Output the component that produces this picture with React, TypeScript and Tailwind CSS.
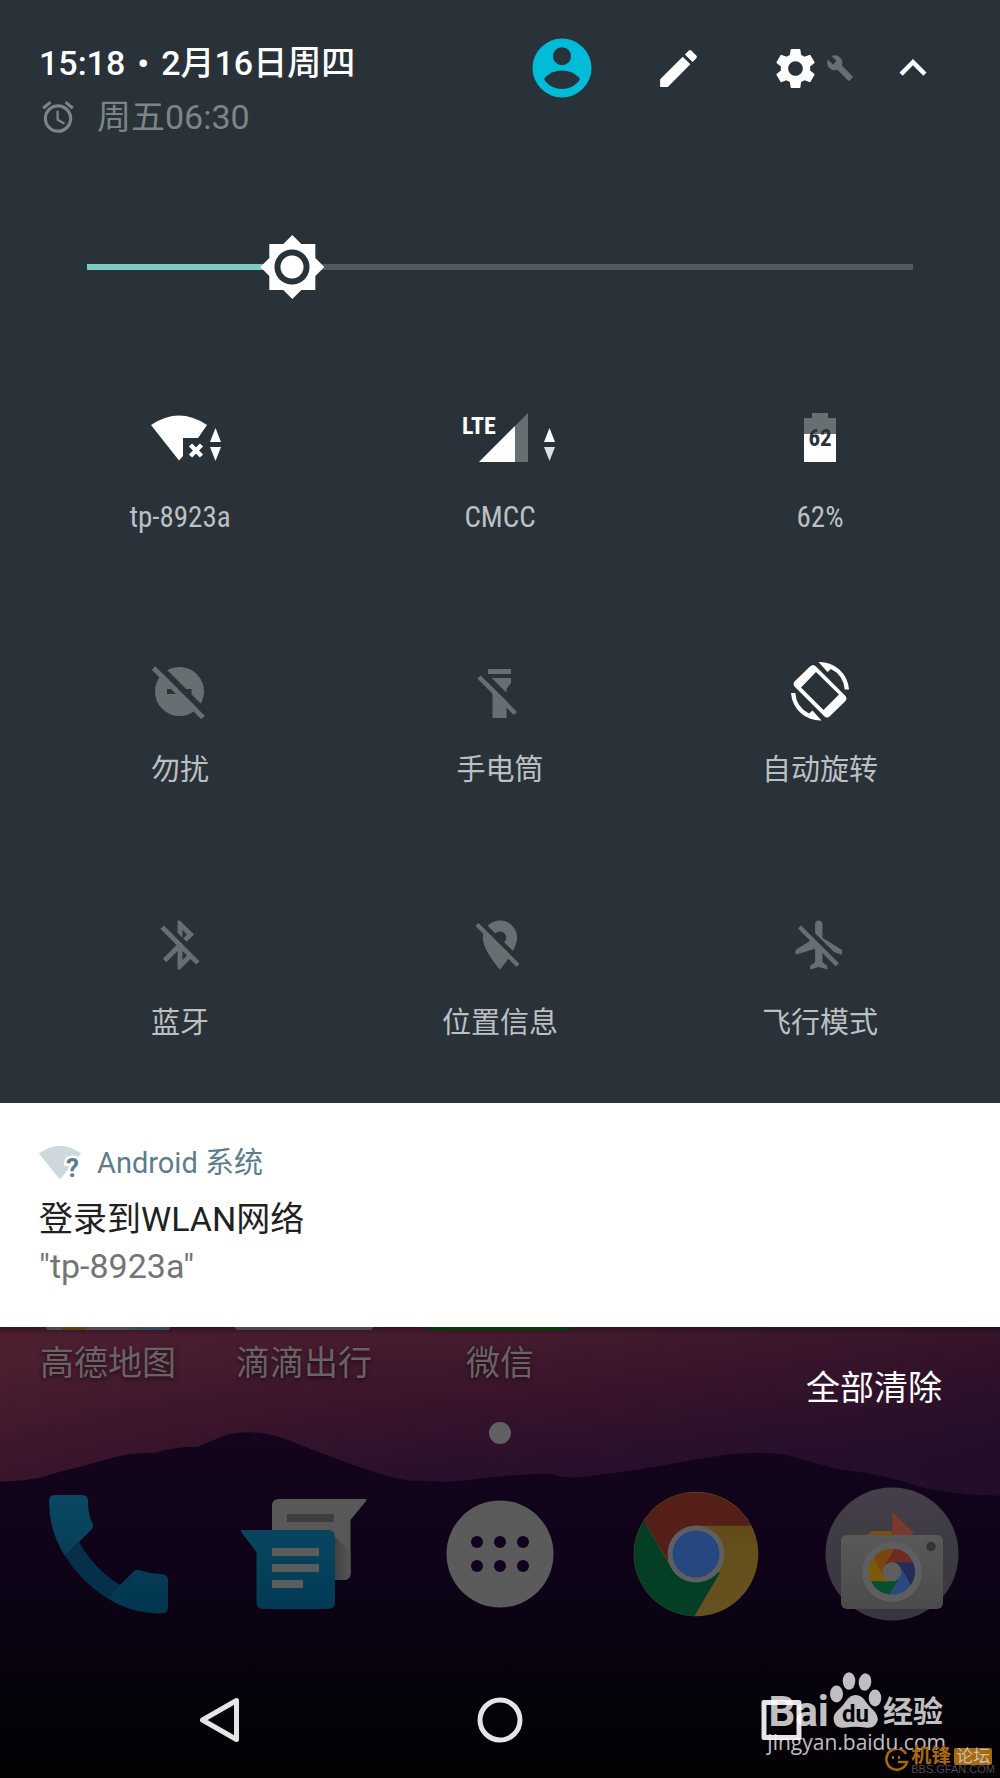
import { useState } from 'react'
import type { ReactNode } from 'react'
import { MdAlarm, MdBuild, MdExpandLess, MdModeEdit, MdSettings } from 'react-icons/md'

interface Tile {
  id: string
  label: string
  icon: ReactNode
}

const MAX_BRIGHTNESS = 255
const THUMB = 64

const OFF = '#686f72'
const PANEL = '#283238'

function DataArrows({ x, idle }: { x: number; idle?: boolean }) {
  return (
    <g fill="#fff">
      <path d={`M${x} 35l5.5-14 5.5 14z`} />
      <path d={`M${x} 40h11l-5.5 14z`} opacity={idle ? 0.85 : 1} />
    </g>
  )
}

function TileIcon({ children }: { children: ReactNode }) {
  return (
    <svg viewBox="0 0 120 64" className="w-[120px] h-16" aria-hidden="true">
      {children}
    </svg>
  )
}

// 24-unit material glyph drawn in the middle of the tile
function OffGlyph({ d }: { d: string }) {
  return (
    <TileIcon>
      <path d={d} fill={OFF} transform="translate(30.6 2.6) scale(2.45)" />
    </TileIcon>
  )
}

const TILES: Tile[] = [
  {
    id: 'wifi',
    label: 'tp-8923a',
    icon: (
      <TileIcon>
        <path d="M31 18Q59-1 87 18L78 31H63V49L59 53.5Z" fill="#fff" />
        <path d="M70.5 38l11 11M81.5 38l-11 11" stroke="#fff" strokeWidth="4.5" />
        <DataArrows x={90} />
      </TileIcon>
    ),
  },
  {
    id: 'cell',
    label: 'CMCC',
    icon: (
      <TileIcon>
        <text x="22" y="27" fill="#fff" className="font-['Roboto_Condensed',Roboto,sans-serif] text-[24px] font-bold">
          LTE
        </text>
        <path d="M39 55L88 6V55Z" fill={OFF} />
        <path d="M39 55L75 19V55Z" fill="#fff" />
        <DataArrows x={104} idle />
      </TileIcon>
    ),
  },
  {
    id: 'battery',
    label: '62%',
    icon: (
      <TileIcon>
        <path d="M52 6H68V11H76V27H44V11H52Z" fill={OFF} />
        <path d="M44 27H76V55H44Z" fill="#fff" />
        <text x="60" y="39" textAnchor="middle" fill={PANEL} className="font-['Roboto_Condensed',Roboto,sans-serif] text-[23px] font-bold">
          62
        </text>
      </TileIcon>
    ),
  },
  {
    id: 'dnd',
    label: '勿扰',
    icon: (
      <TileIcon>
        <circle cx="59.5" cy="31.5" r="24.5" fill={OFF} />
        <path d="M47 29H71.5V34H47Z" fill={PANEL} />
        <path d="M37 4L89 56" stroke={PANEL} strokeWidth="6" />
        <path d="M33.5 8L83 57.5" stroke={OFF} strokeWidth="5" />
      </TileIcon>
    ),
  },
  {
    id: 'flashlight',
    label: '手电筒',
    icon: (
      <TileIcon>
        <path d="M48 18H71V23L66.5 29V58H52.5V29L48 23Z" fill={OFF} />
        <path d="M42 12.5L80 50.5" stroke={PANEL} strokeWidth="6" />
        <path d="M48 9H71V14H48Z" fill={OFF} />
        <path d="M39 17L75.5 53.5" stroke={OFF} strokeWidth="4.5" />
      </TileIcon>
    ),
  },
  {
    id: 'rotate',
    label: '自动旋转',
    icon: (
      <TileIcon>
        <path
          fill="#fff"
          fillRule="evenodd"
          d="M50 6.500Q53 3.500 56 6.500L85 35.500Q88 38.500 85 41.500L70 56Q67 59 64 56L35 27Q32 24 35 21ZM56 12L41 27.500L63.500 50L79 34.500Z"
        />
        <path fill="#fff" d="M58.500 2A29.500 29.500 0 0 1 89 29.500H84.700A25 25 0 0 0 71 9L67.500 12Z" />
        <path fill="#fff" transform="rotate(180 60 31.3)" d="M58.500 2A29.500 29.500 0 0 1 89 29.500H84.700A25 25 0 0 0 71 9L67.500 12Z" />
      </TileIcon>
    ),
  },
  {
    id: 'bluetooth',
    label: '蓝牙',
    icon: (
      <OffGlyph d="M13 5.83l1.88 1.88-1.6 1.6 1.41 1.41 3.02-3.02L12 2h-1v5.03l2 2v-3.2zM5.41 4L4 5.41 10.59 12 5 17.59 6.41 19 11 14.41V22h1l4.29-4.29 2.3 2.29L20 18.59 5.41 4zM13 18.17v-3.76l1.88 1.88L13 18.17z" />
    ),
  },
  {
    id: 'location',
    label: '位置信息',
    icon: (
      <OffGlyph d="M12 6.5c1.38 0 2.5 1.12 2.5 2.5 0 .74-.33 1.39-.83 1.85l3.63 3.63c.98-1.86 1.7-3.8 1.7-5.48 0-3.87-3.13-7-7-7-1.98 0-3.76.83-5.04 2.15l3.19 3.19c.46-.52 1.11-.84 1.85-.84zm4.37 9.6l-4.63-4.63-.11-.11L3.27 3 2 4.27l3.18 3.18C5.07 7.95 5 8.47 5 9c0 5.25 7 13 7 13s1.67-1.85 3.38-4.35L18.73 21 20 19.73l-3.63-3.63z" />
    ),
  },
  {
    id: 'airplane',
    label: '飞行模式',
    icon: (
      <OffGlyph d="M13 9V3.5C13 2.67 12.33 2 11.5 2S10 2.67 10 3.5v3.68l7.83 7.83L21 16v-2l-8-5zM3 5.27l4.99 4.99L2 14v2l8-2.5V19l-2 1.5V22l3.5-1 3.5 1v-1.5L13 19v-3.73L18.46 20.73 19.73 19.46 4.27 4z" />
    ),
  },
]

function Header() {
  return (
    <header className="flex items-start justify-between pl-[39px] pr-[29px] pt-9">
      <div className="text-[34px] leading-[54px] whitespace-nowrap">
        <div className="flex gap-3 font-medium text-white">
          <span>15:18</span>
          <span>•</span>
          <span>2月16日周四</span>
        </div>
        <div className="flex items-center gap-5 text-[#7e8487]">
          <MdAlarm className="size-[38px]" />
          <span>周五06:30</span>
        </div>
      </div>
      <div className="flex h-16 text-white">
        <button type="button" aria-label="User" className="w-[117px] flex items-center justify-center">
          <svg viewBox="0 0 60 60" className="size-[60px]">
            <circle cx="30" cy="30" r="29.5" fill="#00bcd8" />
            <circle cx="30" cy="18.2" r="9" fill={PANEL} />
            <path d="M13 39.500Q20 32.500 30 32.500T47 39.500Q48.500 41 47 43Q40 51 30 51T13 43Q11.500 41 13 39.500Z" fill={PANEL} />
          </svg>
        </button>
        <button type="button" aria-label="Edit" className="w-[117px] flex items-center justify-center">
          <MdModeEdit className="size-[49px]" />
        </button>
        <button type="button" aria-label="Settings" className="relative w-[117px] flex items-center justify-center">
          <MdSettings className="size-[49px]" />
          <MdBuild className="absolute right-0 top-[18px] size-7 text-[#686f72]" />
        </button>
        <button type="button" aria-label="Collapse" className="w-[117px] flex items-center justify-center">
          <MdExpandLess className="size-[54px]" />
        </button>
      </div>
    </header>
  )
}

function BrightnessSlider() {
  const [level, setLevel] = useState(58)
  const ratio = level / MAX_BRIGHTNESS
  const stop = `calc(${THUMB / 2}px + (100% - ${THUMB}px) * ${ratio})`

  return (
    <div className="mt-[91px] px-[87px]">
      <input
        type="range"
        aria-label="Brightness"
        min={0}
        max={MAX_BRIGHTNESS}
        value={level}
        onChange={(e) => setLevel(Number(e.target.value))}
        style={{ backgroundImage: `linear-gradient(to right, #80cbc4 ${stop}, #535b60 ${stop})` }}
        className="block w-full h-16 appearance-none bg-[length:100%_6px] bg-center bg-no-repeat [&::-webkit-slider-thumb]:appearance-none [&::-webkit-slider-thumb]:size-16 [&::-webkit-slider-thumb]:bg-[radial-gradient(circle,#fff_11px,#283238_12px,#283238_17px,#fff_18px)] [&::-webkit-slider-thumb]:[clip-path:polygon(32px_0,41px_9px,55px_9px,55px_23px,64px_32px,55px_41px,55px_55px,41px_55px,32px_64px,23px_55px,9px_55px,9px_41px,0_32px,9px_23px,9px_9px,23px_9px)]"
      />
    </div>
  )
}

function Notification() {
  return (
    <article className="bg-white pl-[39px] pr-10 pt-[38px] pb-[37px]">
      <div className="flex items-center gap-4 text-[29px] leading-[44px] text-[#5c7d8b]">
        <svg viewBox="0 0 42 36" className="w-[42px] h-9 overflow-visible" aria-hidden="true">
          <path d="M0 8.500Q21-7 42 8.500L21 34.500Z" fill="#cfd8dc" />
          <text
            x="27"
            y="32"
            fill="#5c7d8b"
            stroke="#fff"
            strokeWidth="5"
            paintOrder="stroke"
            className="text-[26px] font-bold"
          >
            ?
          </text>
        </svg>
        <span>Android 系统</span>
      </div>
      <h2 className="mt-[11px] text-[34px] leading-[47px] text-[#212121]">登录到WLAN网络</h2>
      <p className="text-[34px] leading-[47px] text-[#747474]">"tp-8923a"</p>
    </article>
  )
}

function Wallpaper() {
  return (
    <svg
      viewBox="0 0 1000 452"
      preserveAspectRatio="none"
      className="absolute inset-0 w-full h-full"
      aria-hidden="true"
    >
      <defs>
        <linearGradient id="sky" x1="460" y1="0" x2="474" y2="170" gradientUnits="userSpaceOnUse">
          <stop offset="0" stopColor="#471c2f" />
          <stop offset="0.5" stopColor="#36132b" />
          <stop offset="1" stopColor="#240e2c" />
        </linearGradient>
        <linearGradient id="side" x1="0" y1="0" x2="1" y2="0">
          <stop offset="0" stopColor="#6b2a36" stopOpacity="0.15" />
          <stop offset="0.5" stopColor="#30122c" stopOpacity="0" />
          <stop offset="1" stopColor="#160a22" stopOpacity="0.2" />
        </linearGradient>
        <linearGradient id="hill" x1="0" y1="0" x2="0" y2="1">
          <stop offset="0" stopColor="#14041d" />
          <stop offset="0.4" stopColor="#0e0318" />
          <stop offset="0.75" stopColor="#06020a" />
          <stop offset="1" stopColor="#030104" />
        </linearGradient>
        <linearGradient id="shade" x1="0" y1="0" x2="0" y2="1">
          <stop offset="0" stopOpacity="0.3" />
          <stop offset="1" stopOpacity="0" />
        </linearGradient>
      </defs>
      <rect width="1000" height="200" fill="url(#sky)" />
      <rect width="1000" height="200" fill="url(#side)" />
      <path
        fill="url(#hill)"
        d="M0 155Q25 154 40 151Q60 144 80 140L120 129Q135 126 155 126Q175 120 197 120C210 116 225 106 240 106Q260 104 282 111C310 122 350 138 380 147Q405 155 420 154Q450 156 470 153Q520 147 550 147Q572 153 585 150L630 144Q660 139 700 132C730 127 750 125 780 127Q810 134 835 142L865 146Q900 153 920 160Q950 168 1000 169V452H0Z"
      />
      <rect width="1000" height="8" fill="url(#shade)" />
    </svg>
  )
}

function PhoneIcon() {
  return (
    <svg viewBox="0 0 120 120" className="size-[120px]">
      <defs>
        <linearGradient id="phone" x1="0" y1="0" x2="0" y2="120" gradientUnits="userSpaceOnUse">
          <stop offset="0" stopColor="#0b4863" />
          <stop offset="1" stopColor="#02354f" />
        </linearGradient>
      </defs>
      <path fill="#06304a" d="M17 62L31 48Q47 76 72 91L59 104Q33 88 17 62Z" />
      <g fill="url(#phone)">
        <path d="M7 1H34Q40 1 40 7Q40 22 45 31Q45.500 33 44 35L17 62Q1 37 1 7Q1 1 7 1Z" />
        <path d="M59 104L85 78Q88 75 91 76Q100 79.500 113 80Q120 80 120 86V113Q120 119.500 113 119.500Q83 119.500 59 104Z" />
      </g>
    </svg>
  )
}

function MessagesIcon() {
  return (
    <svg viewBox="0 0 126 112" className="w-[126px] h-[112px]">
      <defs>
        <linearGradient id="bubble" x1="0" y1="0" x2="0" y2="1">
          <stop offset="0" stopColor="#0a4560" />
          <stop offset="1" stopColor="#023a54" />
        </linearGradient>
        <linearGradient id="fold" x1="0" y1="0" x2="1" y2="0">
          <stop offset="0" stopColor="#404040" />
          <stop offset="1" stopColor="#555" />
        </linearGradient>
      </defs>
      <path fill="#585858" d="M38 1H124Q126 1 125 3L109.500 22V75Q109.500 82 103 82H31V8Q31 1 38 1Z" />
      <path fill="url(#fold)" d="M93 38L109.500 54V75Q109.500 82 103 82H93Z" />
      <path fill="#3e3e3e" d="M46 16H93V24H46Z" />
      <path fill="url(#bubble)" d="M1 32H87Q94 32 94 39V104Q94 111 87 111H22Q15.500 111 15.500 104V54L0 34Q-.5 32 1 32Z" />
      <path fill="#5c5c5c" d="M31 50H78V58H31ZM31 66H78V74H31ZM31 82H62V90H31Z" />
    </svg>
  )
}

function AppsIcon() {
  return (
    <svg viewBox="0 0 108 108" className="size-[108px]">
      <circle cx="54" cy="54" r="53.5" fill="#5b5b5b" />
      {[31, 54, 77].map((x) => (
        <g key={x} fill="#110320">
          <circle cx={x} cy="42" r="6" />
          <circle cx={x} cy="66" r="6" />
        </g>
      ))}
    </svg>
  )
}

function ChromeIcon() {
  return (
    <svg viewBox="0 0 126 126" className="size-[126px]">
      <defs>
        <linearGradient id="yellow" x1="0" y1="0" x2="0" y2="1">
          <stop offset="0" stopColor="#5f4718" />
          <stop offset="0.5" stopColor="#64501c" />
          <stop offset="1" stopColor="#665220" />
        </linearGradient>
      </defs>
      <circle cx="63" cy="63" r="62.3" fill="url(#yellow)" />
      <path fill="#541e19" d="M10.700 29.700A62.300 62.300 0 0 1 118 34.700H63L35 70Z" />
      <path fill="#043f25" d="M10.700 29.700L36 73L63 80L87 81.500L61.300 125.300A62.300 62.300 0 0 1 10.700 29.700Z" />
      <circle cx="63" cy="63" r="28.5" fill="#5f5f5f" />
      <circle cx="63" cy="63" r="23.5" fill="#264780" />
    </svg>
  )
}

function CameraIcon() {
  return (
    <svg viewBox="0 0 134 134" className="size-[134px]">
      <defs>
        <linearGradient id="disc" x1="0" y1="0" x2="0" y2="1">
          <stop offset="0" stopColor="#443f4a" />
          <stop offset="1" stopColor="#38353d" />
        </linearGradient>
        <linearGradient id="body" x1="0" y1="0" x2="0" y2="1">
          <stop offset="0" stopColor="#595959" />
          <stop offset="1" stopColor="#4b4b4b" />
        </linearGradient>
      </defs>
      <circle cx="67" cy="67" r="66.5" fill="url(#disc)" />
      <path fill="#3f3f3f" d="M23 48Q24 41.500 29 41.500H37Q41 41.500 42 48Z" />
      <path fill="#7a5012" d="M42 48L47 44H67V48Z" />
      <path fill="#79392f" d="M67.300 24.700L89 46L87 48H67.300Z" />
      <rect x="16" y="48" width="102" height="74" rx="6" fill="url(#body)" />
      <circle cx="106" cy="59.5" r="4.7" fill="#333" />
      <circle cx="67" cy="84.7" r="30" fill="#5e5e5e" />
      <path fill="#6d2c22" d="M69.400 61.800A23 23 0 0 1 88 75.300L69.800 75.100L67 84.700L60 77.500Z" />
      <path fill="#242d59" d="M88 75.300A23 23 0 0 1 85.600 98.200L76.700 82.300L67 84.700L69.800 75.100Z" />
      <path fill="#274a85" d="M85.600 98.200A23 23 0 0 1 64.600 107.600L74 91.900L67 84.700L76.700 82.300Z" />
      <path fill="#07502e" d="M64.600 107.600A23 23 0 0 1 46 94L64.200 94.300L67 84.700L74 91.900Z" />
      <path fill="#7a5b08" d="M46 94A23 23 0 0 1 48.400 71.200L57.300 87.100L67 84.700L64.200 94.300Z" />
      <path fill="#7b460d" d="M48.400 71.200A23 23 0 0 1 69.400 61.800L60 77.500L67 84.700L57.300 87.100Z" />
      <circle cx="67" cy="84.7" r="9.5" fill="#5e5e5e" />
    </svg>
  )
}

const DOCK = [
  { name: 'Phone', icon: <PhoneIcon /> },
  { name: 'Messages', icon: <MessagesIcon /> },
  { name: 'Apps', icon: <AppsIcon /> },
  { name: 'Chrome', icon: <ChromeIcon /> },
  { name: 'Camera', icon: <CameraIcon /> },
]

function Watermarks() {
  return (
    <>
      <div className="absolute right-[54px] bottom-[24px] text-white/75 whitespace-nowrap">
        <div className="flex items-end justify-end pr-[3px] text-[42px] leading-[44px] font-bold">
          <span>Bai</span>
          <svg viewBox="0 0 54 60" className="w-[54px] h-[60px] mb-1" aria-hidden="true">
            <g fill="#fff" fillOpacity="0.75">
              <ellipse cx="7.5" cy="24" rx="6.5" ry="8.5" />
              <ellipse cx="20" cy="11" rx="6.3" ry="8.7" />
              <ellipse cx="36" cy="12" rx="6.3" ry="8.7" transform="rotate(8 36 12)" />
              <ellipse cx="46" cy="28" rx="6.3" ry="8.5" />
              <path d="M26.500 25Q33 25 37 32Q40 36 46 42Q51 49 47 54Q43 59 36 57.500Q26 56 17 57.500Q8 59 5.500 53Q3 46 8 41Q14 36 17 31Q21 25 26.500 25Z" />
            </g>
            <text x="26.5" y="52" textAnchor="middle" fill="#08030c" className="text-[24px] font-bold">
              du
            </text>
          </svg>
          <span className="text-[30px]">经验</span>
        </div>
        <div className="-mt-1 text-right font-['Open_Sans',sans-serif] text-[21px] font-medium leading-[24px]">jingyan.baidu.com</div>
      </div>
      <div className="absolute right-[5px] bottom-[5px] flex items-center gap-[2px] text-[#a8690d]">
        <svg viewBox="0 0 24 24" className="size-6" aria-hidden="true">
          <path d="M21 5A10.500 10.500 0 1 0 22 13H13" fill="none" stroke="currentColor" strokeWidth="2.5" />
          <path d="M8 7v3M14 7v3" stroke="currentColor" strokeWidth="2" />
        </svg>
        <div className="whitespace-nowrap">
          <div className="flex gap-[3px] text-[20px] leading-[17px] font-bold">
            <span>机锋</span>
            <span className="rounded-xs bg-[#a8690d] px-[2px] text-[17px] font-normal text-[#c9bfae]">论坛</span>
          </div>
          <div className="font-['Liberation_Sans',sans-serif] text-[11px] leading-[8px] text-[#4d4a4f]">BBS.GFAN.COM</div>
        </div>
      </div>
    </>
  )
}

function HomeScreen() {
  return (
    <section className="relative flex-1 overflow-hidden bg-[#030104]">
      <Wallpaper />
      <div className="relative">
        <div className="grid grid-cols-5 px-[10px] text-center text-[34px] leading-[48px]">
          <div>
            <div className="mx-auto flex h-[3px] w-[124px] overflow-hidden rounded-b-md bg-[#514c4b]">
              <div className="ml-4 w-6 bg-[#55421a]" />
              <div className="ml-auto w-9 bg-[#364a5c]" />
            </div>
            <div className="mt-[9px] text-[#6a6265] [text-shadow:0_2px_4px_rgba(0,0,0,0.6)]">高德地图</div>
          </div>
          <div>
            <div className="mx-auto h-[3px] w-[138px] rounded-b-md bg-[#4d4a4b]" />
            <div className="mt-[9px] text-[#6a6265] [text-shadow:0_2px_4px_rgba(0,0,0,0.6)]">滴滴出行</div>
          </div>
          <div>
            <div className="mx-auto h-[3px] w-36 rounded-b-md bg-[#053a09]" />
            <div className="mt-[9px] text-[#6a6265] [text-shadow:0_2px_4px_rgba(0,0,0,0.6)]">微信</div>
          </div>
          <div className="col-span-2 flex justify-end pr-12 pt-[37px]">
            <button type="button" className="text-white">
              全部清除
            </button>
          </div>
        </div>

        <div className="mx-auto mt-[10px] size-[22px] rounded-full bg-[#636063]" />

        <div className="mt-[43px] grid grid-cols-5 px-[10px]">
          {DOCK.map((app) => (
            <button key={app.name} type="button" aria-label={app.name} className="flex h-[134px] items-center justify-center">
              {app.icon}
            </button>
          ))}
        </div>

        <nav className="mt-[75px] mb-[34px] flex px-[78px]">
          <button type="button" aria-label="Back" className="flex flex-1 justify-center">
            <svg viewBox="0 0 48 48" className="size-12" fill="none" stroke="#e6e4e6" strokeWidth="5" strokeLinejoin="round">
              <path d="M41.500 4.500V43.500L7.500 24Z" />
            </svg>
          </button>
          <button type="button" aria-label="Home" className="flex flex-1 justify-center">
            <svg viewBox="0 0 48 48" className="size-12" fill="none" stroke="#e6e4e6" strokeWidth="5">
              <circle cx="24" cy="24" r="20" />
            </svg>
          </button>
          <button type="button" aria-label="Recents" className="flex flex-1 justify-center">
            <svg viewBox="0 0 48 48" className="size-12" fill="none" stroke="#e6e4e6" strokeWidth="5" strokeLinejoin="round">
              <rect x="7" y="6.5" width="35" height="35" />
            </svg>
          </button>
        </nav>
      </div>
      <Watermarks />
    </section>
  )
}

export default function App() {
  return (
    <main className="flex min-h-screen flex-col font-[Roboto,'Noto_Sans_CJK_SC',sans-serif]">
      <section className="bg-[#283238]">
        <Header />
        <BrightnessSlider />
        <div className="mt-12 grid grid-cols-3 gap-y-[3px] px-5">
          {TILES.map((tile) => (
            <button key={tile.id} type="button" className="flex h-[250px] flex-col items-center pt-[60px]">
              {tile.icon}
              <span className="mt-7 font-['Roboto_Condensed','Liberation_Sans_Narrow',Roboto,'Noto_Sans_CJK_SC',sans-serif] text-[29px] leading-[36px] text-[#bdc0c2]">
                {tile.label}
              </span>
            </button>
          ))}
        </div>
      </section>
      <Notification />
      <HomeScreen />
    </main>
  )
}
